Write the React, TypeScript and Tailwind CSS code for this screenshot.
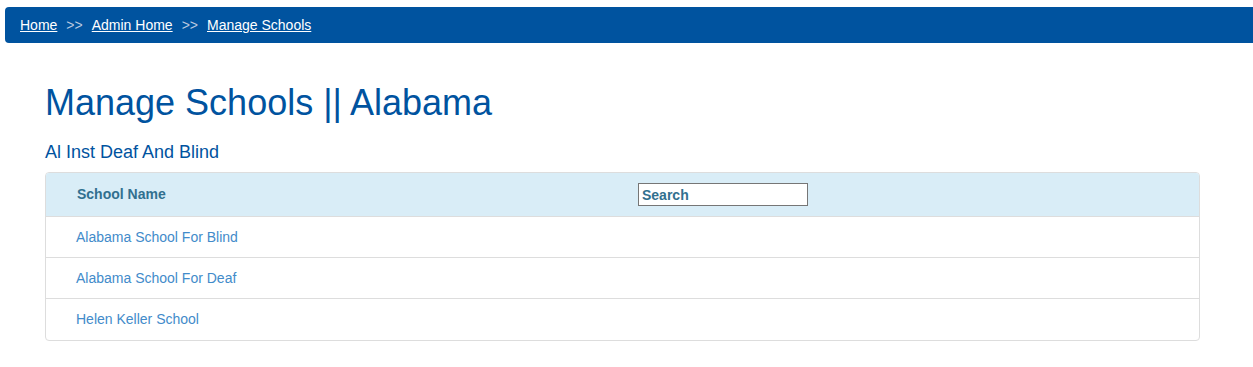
import React from "react";

const schools = [
  "Alabama School For Blind",
  "Alabama School For Deaf",
  "Helen Keller School",
];

const App = () => {
  return (
    <div className="w-full min-h-[367px] bg-white font-['Liberation_Sans',Arial,sans-serif]">
      <div className="pt-[7px] pl-[5px]">
        <div className="h-[36px] bg-[#00539f] rounded-l-[4px] flex items-center pl-[15px] text-[14px] text-white">
          <a href="#" className="underline">Home</a>
          <span className="mx-[9px] text-[#b8c8e0]">&gt;&gt;</span>
          <a href="#" className="underline">Admin Home</a>
          <span className="mx-[9px] text-[#b8c8e0]">&gt;&gt;</span>
          <a href="#" className="underline">Manage Schools</a>
        </div>
      </div>

      <div className="pl-[45px] w-[1200px]">
        <h1 className="mt-[40px] text-[36px] leading-[40px] text-[#00539f]">
          Manage Schools || Alabama
        </h1>
        <h2 className="mt-[19px] text-[18px] leading-[20px] text-[#00539f]">
          Al Inst Deaf And Blind
        </h2>

        <div className="mt-[10px] border border-[#dddddd] rounded-[4px] overflow-hidden">
          <div className="h-[44px] bg-[#d9edf7] flex items-center border-b border-[#dddddd]">
            <div className="w-[592px] pl-[31px] text-[14px] font-bold text-[#31708f]">
              School Name
            </div>
            <input
              type="text"
              defaultValue="Search"
              className="w-[170px] h-[23px] bg-white border border-[#767676] px-[3px] text-[14px] font-bold text-[#31708f] outline-none"
            />
          </div>
          {schools.map((name, i) => (
            <div
              key={name}
              className={`h-[41px] flex items-center pl-[30px] text-[14px] text-[#428bca] ${
                i < schools.length - 1 ? "border-b border-[#dddddd]" : ""
              }`}
            >
              {name}
            </div>
          ))}
        </div>
      </div>
    </div>
  );
};

export default App;
